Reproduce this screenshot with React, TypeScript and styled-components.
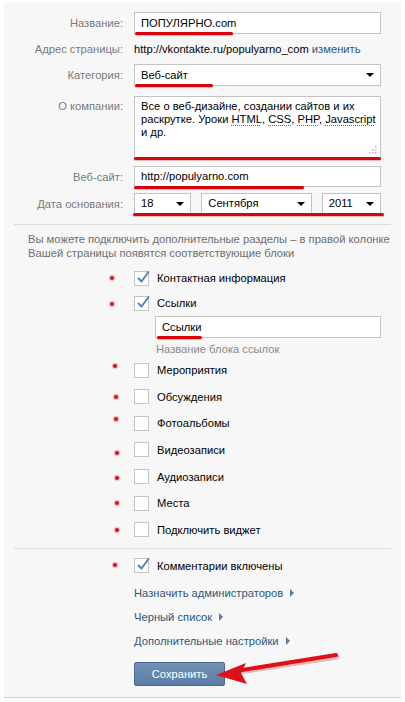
import React from 'react';
import styled, { createGlobalStyle } from 'styled-components';

const Global = createGlobalStyle`
  html, body { margin: 0; padding: 0; background: #fff; }
  body {
    font-family: Tahoma, "Liberation Sans", Arial, sans-serif;
    font-size: 11.2px;
    color: #000;
  }
`;

const Panel = styled.div`
  position: relative;
  box-sizing: border-box;
  width: 397px;
  height: 695px;
  margin: 3px 0 0 4px;
  padding-top: 9px;
  background: #f7f7f7;
  border-bottom: 1px solid #cdcdcd;
`;

const Form = styled.div`
  display: grid;
  grid-template-columns: 119px 247px;
  column-gap: 11px;
  align-items: center;
`;

const Label = styled.div<{ $top?: boolean; $mt?: number }>`
  text-align: right;
  color: #7a7a7a;
  align-self: ${p => (p.$top ? 'start' : 'center')};
  padding-top: ${p => (p.$top ? 4 : 0)}px;
  margin-top: ${p => p.$mt ?? 0}px;
`;

const Field = styled.div<{ $mt?: number }>`
  position: relative;
  margin-top: ${p => p.$mt ?? 0}px;
`;

const Box = styled.div<{ $h?: number; $w?: number }>`
  position: relative;
  box-sizing: border-box;
  height: ${p => p.$h ?? 22}px;
  width: ${p => (p.$w ? `${p.$w}px` : '100%')};
  background: #fff;
  border: 1px solid #c3c3c3;
  padding: 0 6px;
  line-height: ${p => (p.$h ?? 22) - 2}px;
  white-space: nowrap;
`;

const Arrow = styled.span`
  position: absolute;
  right: 6px;
  top: 50%;
  margin-top: -2px;
  width: 0;
  height: 0;
  border-left: 4px solid transparent;
  border-right: 4px solid transparent;
  border-top: 4px solid #000;
`;

const AreaBox = styled.div`
  position: relative;
  box-sizing: border-box;
  height: 62px;
  background: #fff;
  border: 1px solid #c3c3c3;
  padding: 3px 6px;
  line-height: 13px;
  white-space: nowrap;
`;

const Spell = styled.span`
  text-decoration: underline dotted #d04040;
  text-decoration-thickness: 1px;
  text-underline-offset: 2px;
`;

const Grip = styled.svg`
  position: absolute;
  right: 3px;
  bottom: 3px;
`;

const Plain = styled.div`
  line-height: 14px;
  white-space: nowrap;
`;

const Link = styled.span`
  color: #2b587a;
`;

const DateRow = styled.div`
  display: flex;
  gap: 10px;
`;

const Mark = styled.span<{ $l: number; $w: number; $b?: number }>`
  position: absolute;
  left: ${p => p.$l}px;
  width: ${p => p.$w}px;
  bottom: ${p => p.$b ?? -2}px;
  height: 3px;
  border-radius: 2px;
  background: #d8040c;
  box-shadow: 0 1px 1px rgba(120, 0, 0, 0.25);
`;

const Sep = styled.div<{ $mt: number }>`
  height: 1px;
  margin: ${p => p.$mt}px 10px 0;
  background: #dcdcdc;
`;

const Note = styled.p`
  margin: 7px 0 0 24px;
  color: #6e6e6e;
  line-height: 14px;
`;

const Options = styled.div<{ $mt: number; $gap: number }>`
  display: flex;
  flex-direction: column;
  gap: ${p => p.$gap}px;
  margin-top: ${p => p.$mt}px;
`;

const Row = styled.div`
  position: relative;
  display: flex;
  align-items: center;
  height: 16px;
  padding-left: 130px;
`;

const Dot = styled.span<{ $x: number; $dy: number }>`
  position: absolute;
  left: ${p => p.$x - 6}px;
  top: ${p => 6 + p.$dy}px;
  width: 4px;
  height: 4px;
  border-radius: 50%;
  background: #d4141c;
  box-shadow: 0 0 1px 1px rgba(220, 40, 40, 0.3);
`;

const Check = styled.span`
  position: relative;
  box-sizing: border-box;
  width: 15px;
  height: 15px;
  background: #fff;
  border: 1px solid #c4c4c4;
  flex: none;
  svg { position: absolute; left: 1px; top: -2px; overflow: visible; }
`;

const CheckText = styled.span`
  margin-left: 8px;
`;

const Sub = styled.div`
  position: relative;
  margin: 5px 0 0 151px;
  width: 226px;
`;

const Hint = styled.div`
  margin: 5px 0 0 152px;
  color: #8a8a8a;
  line-height: 12px;
`;

const Links = styled.div`
  display: flex;
  flex-direction: column;
  gap: 10px;
  margin: 12px 0 0 130px;
`;

const NavLink = styled.div`
  color: #2b587a;
  line-height: 14px;
  display: flex;
  align-items: center;
  gap: 7px;
`;

const Tri = styled.span`
  width: 0;
  height: 0;
  border-top: 4px solid transparent;
  border-bottom: 4px solid transparent;
  border-left: 4px solid #5a7ca2;
`;

const Button = styled.button`
  display: block;
  margin: 14px 0 0 130px;
  width: 91px;
  height: 24px;
  padding: 0;
  border: 1px solid #48688f;
  border-radius: 2px;
  background: linear-gradient(#7193b8, #5a7ca3);
  color: #fff;
  font: inherit;
`;

const Pointer = styled.svg`
  position: absolute;
  left: 0;
  top: 0;
  pointer-events: none;
`;

const checkMark = (
  <svg width="14" height="14" viewBox="0 0 14 14">
    <path d="M2.5 8.5 L5.5 11.5 L12.5 2" fill="none" stroke="#5d83ab" strokeWidth="2" strokeLinecap="round" strokeLinejoin="round" />
  </svg>
);

type Opt = { text: string; checked?: boolean; x: number; dy: number };

const first: Opt[] = [
  { text: 'Контактная информация', checked: true, x: 112, dy: 0 },
  { text: 'Ссылки', checked: true, x: 112, dy: 1 },
];

const rest: Opt[] = [
  { text: 'Мероприятия', x: 115, dy: -4 },
  { text: 'Обсуждения', x: 116, dy: 0 },
  { text: 'Фотоальбомы', x: 116, dy: -4 },
  { text: 'Видеозаписи', x: 117, dy: 3 },
  { text: 'Аудиозаписи', x: 117, dy: 1 },
  { text: 'Места', x: 117, dy: 0 },
  { text: 'Подключить виджет', x: 117, dy: 0 },
];

const Option = ({ o }: { o: Opt }) => (
  <Row>
    <Dot $x={o.x} $dy={o.dy} />
    <Check>{o.checked ? checkMark : null}</Check>
    <CheckText>{o.text}</CheckText>
  </Row>
);

export default function App() {
  return (
    <>
      <Global />
      <Panel>
        <Form>
          <Label>Название:</Label>
          <Field>
            <Box>ПОПУЛЯРНО.com</Box>
            <Mark $l={1} $w={98} $b={-1} />
          </Field>

          <Label $mt={8}>Адрес страницы:</Label>
          <Field $mt={8}>
            <Plain>
              http://vkontakte.ru/populyarno_com <Link>изменить</Link>
            </Plain>
          </Field>

          <Label $mt={8}>Категория:</Label>
          <Field $mt={8}>
            <Box>
              Веб-сайт
              <Arrow />
            </Box>
            <Mark $l={1} $w={78} $b={-1} />
          </Field>

          <Label $top $mt={10}>О компании:</Label>
          <Field $mt={10}>
            <AreaBox>
              Все о веб-дизайне, создании сайтов и их
              <br />
              раскрутке. Уроки <Spell>HTML</Spell>, <Spell>CSS</Spell>, <Spell>PHP</Spell>, <Spell>Javascript</Spell>
              <br />
              и др.
              <Grip width="8" height="8" viewBox="0 0 8 8">
                <g fill="#b5b5b5">
                  <rect x="6" y="0" width="1.5" height="1.5" />
                  <rect x="3" y="3" width="1.5" height="1.5" />
                  <rect x="6" y="3" width="1.5" height="1.5" />
                  <rect x="0" y="6" width="1.5" height="1.5" />
                  <rect x="3" y="6" width="1.5" height="1.5" />
                  <rect x="6" y="6" width="1.5" height="1.5" />
                </g>
              </Grip>
            </AreaBox>
            <Mark $l={0} $w={247} $b={-2} />
          </Field>

          <Label $mt={8}>Веб-сайт:</Label>
          <Field $mt={8}>
            <Box $h={21}>http://populyarno.com</Box>
            <Mark $l={0} $w={170} $b={-2} />
          </Field>

          <Label $mt={6}>Дата основания:</Label>
          <Field $mt={6}>
            <DateRow>
              <Box $h={21} $w={58}>18<Arrow /></Box>
              <Box $h={21} $w={112}>Сентября<Arrow /></Box>
              <Box $h={21} $w={60}>2011<Arrow /></Box>
            </DateRow>
            <Mark $l={-1} $w={251} $b={-2} />
          </Field>
        </Form>

        <Sep $mt={10} />
        <Note>
          Вы можете подключить дополнительные разделы – в правой колонке Вашей страницы появятся соответствующие блоки
        </Note>

        <Options $mt={10} $gap={9}>
          {first.map(o => <Option key={o.text} o={o} />)}
        </Options>
        <Sub>
          <Box>Ссылки</Box>
          <Mark $l={2} $w={45} $b={-1} />
        </Sub>
        <Hint>Название блока ссылок</Hint>

        <Options $mt={7} $gap={10.67}>
          {rest.map(o => <Option key={o.text} o={o} />)}
        </Options>

        <Sep $mt={10} />

        <Options $mt={9} $gap={0}>
          <Option o={{ text: 'Комментарии включены', checked: true, x: 115, dy: -1 }} />
        </Options>

        <Links>
          <NavLink>Назначить администраторов <Tri /></NavLink>
          <NavLink>Черный список <Tri /></NavLink>
          <NavLink>Дополнительные настройки <Tri /></NavLink>
        </Links>

        <Button>Сохранить</Button>

        <Pointer width="397" height="695" viewBox="0 0 397 695">
          <g transform="translate(-4,-3)">
            <path d="M238 670 L336 655" stroke="#9a0000" strokeOpacity="0.25" strokeWidth="5" strokeLinecap="round" transform="translate(1,2)" />
            <path d="M236 671 L336 655" stroke="#e0101a" strokeWidth="4" strokeLinecap="round" />
            <path d="M216 675 L246 663 L241 673 L247 684 Z" fill="#e0101a" />
          </g>
        </Pointer>
      </Panel>
    </>
  );
}
